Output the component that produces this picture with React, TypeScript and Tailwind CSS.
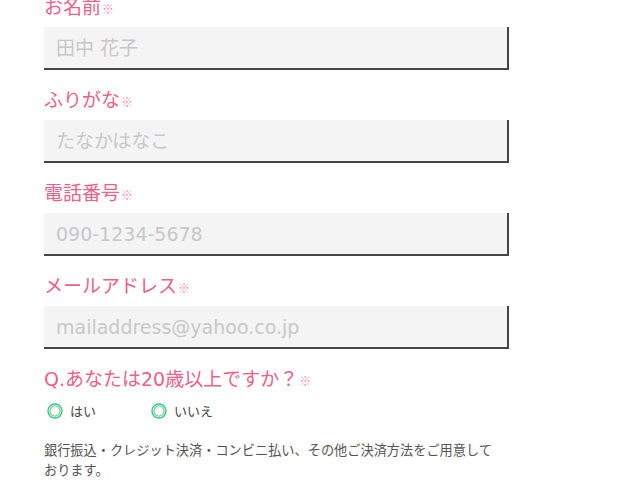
const jp = "font-['DejaVu_Sans','Noto_Sans_CJK_JP',sans-serif]";

const fields = [
  { label: "お名前", placeholder: "田中 花子" },
  { label: "ふりがな", placeholder: "たなかはなこ" },
  { label: "電話番号", placeholder: "090-1234-5678" },
  { label: "メールアドレス", placeholder: "mailaddress@yahoo.co.jp" },
];

function Label({ text }: { text: string }) {
  return (
    <div className="flex h-[24px] items-center text-[19px] leading-[24px] text-[#ef5f88]">
      {text}
      <span className="ml-[1px] mt-[3px] font-['Noto_Sans_CJK_JP',sans-serif] text-[12px] text-[#f393ad]">※</span>
    </div>
  );
}

function Radio({ text }: { text: string }) {
  return (
    <label className="flex items-center gap-[7px] font-['Noto_Sans_CJK_JP',sans-serif] text-[13px] text-[#444]">
      <svg width="16" height="16" viewBox="0 0 16 16">
        <circle cx="8" cy="8" r="7" fill="none" stroke="#3ec47e" strokeWidth="1.4" />
        <circle cx="8" cy="8" r="5.1" fill="none" stroke="#7bd6a4" strokeWidth="1.4" />
      </svg>
      {text}
    </label>
  );
}

export default function App() {
  return (
    <div className={`${jp} mt-[-5px] min-h-[508px] bg-white pl-[44px]`}>
      {fields.map((f) => (
        <div key={f.label} className="mb-[18px]">
          <Label text={f.label} />
          <input
            placeholder={f.placeholder}
            className="mt-[8px] block h-[43px] w-[465px] border-b-2 border-r-2 border-[#444] bg-[#f4f4f4] pl-[12px] text-[19px] text-[#333] outline-none placeholder:text-[#c8c8c8]"
          />
        </div>
      ))}
      <Label text="Q.あなたは20歳以上ですか？" />
      <div className="mt-[10px] flex pl-[3px]">
        <div className="w-[104px]">
          <Radio text="はい" />
        </div>
        <Radio text="いいえ" />
      </div>
      <p className="mt-[19px] w-[460px] font-['Noto_Sans_CJK_JP',sans-serif] text-[13.2px] leading-[20px] text-[#555]">
        銀行振込・クレジット決済・コンビニ払い、その他ご決済方法をご用意しております。
      </p>
    </div>
  );
}
